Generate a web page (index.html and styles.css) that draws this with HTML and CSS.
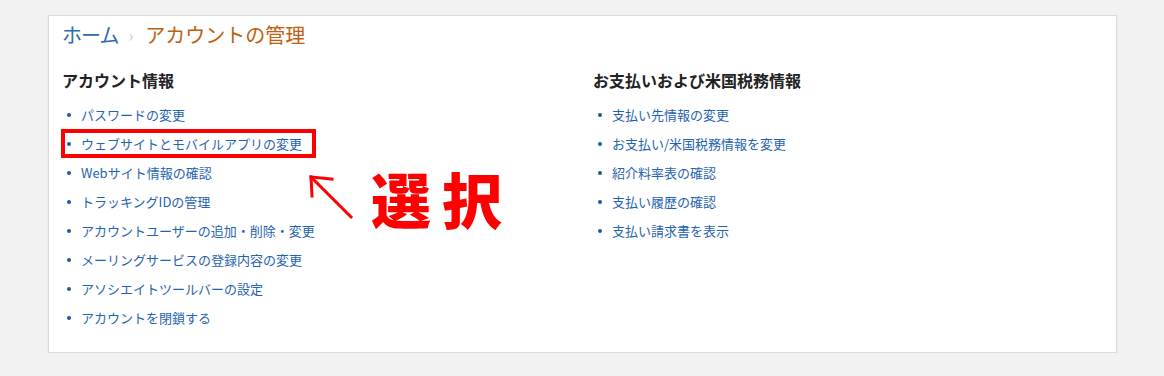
FILE: index.html
```html
<!DOCTYPE html>
<html lang="ja">
<head>
<meta charset="utf-8">
<title>アカウントの管理</title>
<link rel="stylesheet" href="styles.css">
</head>
<body>
<div class="page">
  <div class="card">
    <div class="crumbs">
      <a class="crumb-link" href="#">ホーム</a>
      <span class="crumb-sep">›</span>
      <span class="crumb-current">アカウントの管理</span>
    </div>
    <div class="cols">
      <section class="col">
        <h2 class="col-title">アカウント情報</h2>
        <ul class="links">
          <li class="item"><a href="#">パスワードの変更</a></li>
          <li class="item item-hl"><a href="#">ウェブサイトとモバイルアプリの変更</a></li>
          <li class="item"><a href="#">Webサイト情報の確認</a></li>
          <li class="item"><a href="#">トラッキングIDの管理</a></li>
          <li class="item"><a href="#">アカウントユーザーの追加・削除・変更</a></li>
          <li class="item"><a href="#">メーリングサービスの登録内容の変更</a></li>
          <li class="item"><a href="#">アソシエイトツールバーの設定</a></li>
          <li class="item"><a href="#">アカウントを閉鎖する</a></li>
        </ul>
      </section>
      <section class="col">
        <h2 class="col-title">お支払いおよび米国税務情報</h2>
        <ul class="links">
          <li class="item"><a href="#">支払い先情報の変更</a></li>
          <li class="item"><a href="#">お支払い/米国税務情報を変更</a></li>
          <li class="item"><a href="#">紹介料率表の確認</a></li>
          <li class="item"><a href="#">支払い履歴の確認</a></li>
          <li class="item"><a href="#">支払い請求書を表示</a></li>
        </ul>
      </section>
    </div>
    <svg class="anno-arrow" width="60" height="60" viewBox="0 0 60 60">
      <g stroke="#ff0000" stroke-width="3" stroke-linecap="square" fill="none">
        <line x1="12" y1="9" x2="51" y2="48"/>
        <line x1="11" y1="8" x2="32" y2="10"/>
        <line x1="11" y1="8" x2="12" y2="27"/>
      </g>
    </svg>
    <div class="anno-text">選択</div>
  </div>
</div>
</body>
</html>
```
FILE: styles.css
```css
html, body {
  margin: 0;
  padding: 0;
  background: #f2f2f2;
}
body {
  font-family: "Noto Sans CJK JP", "Noto Sans", sans-serif;
  color: #333;
}
.page {
  padding: 15px 47px 0 48px;
}
.card {
  position: relative;
  background: #fff;
  border: 1px solid #dcdcdc;
  box-shadow: 0 1px 2px rgba(0, 0, 0, 0.08);
  height: 338px;
  box-sizing: border-box;
  padding: 7px 13px 0 13px;
}
.crumbs {
  font-size: 20px;
  line-height: 24px;
  display: flex;
  align-items: center;
}
.crumb-link {
  color: #2a6cb0;
  text-decoration: none;
  letter-spacing: -1px;
}
.crumb-sep {
  color: #c8c8c8;
  font-size: 16px;
  margin: 0 12px 0 10px;
}
.crumb-current {
  color: #c06010;
}
.cols {
  display: grid;
  grid-template-columns: 531px 1fr;
  margin-top: 22px;
}
.col-title {
  margin: 0;
  font-size: 16px;
  line-height: 22px;
  font-weight: 700;
  color: #222;
}
.links {
  list-style: none;
  margin: 9px 0 0 0;
  padding: 0;
}
.item {
  display: flex;
  align-items: center;
  height: 29px;
  font-size: 13px;
}
.item::before {
  content: "";
  width: 4px;
  height: 4px;
  border-radius: 50%;
  background: #1d5a99;
  margin: 1px 10px 0 5px;
  flex: none;
}
.item a {
  color: #1f64b0;
  text-decoration: none;
}
.item-hl {
  width: fit-content;
  box-sizing: border-box;
  border: 4px solid #ff0000;
  margin-left: -1px;
  padding-right: 10px;
}
.item-hl::before {
  margin-left: 2px;
}
.anno-arrow {
  position: absolute;
  left: 251px;
  top: 153px;
}
.anno-text {
  position: absolute;
  left: 322px;
  top: 152px;
  font-size: 60px;
  line-height: 60px;
  font-weight: 900;
  letter-spacing: 11px;
  color: #ff0000;
}
```
